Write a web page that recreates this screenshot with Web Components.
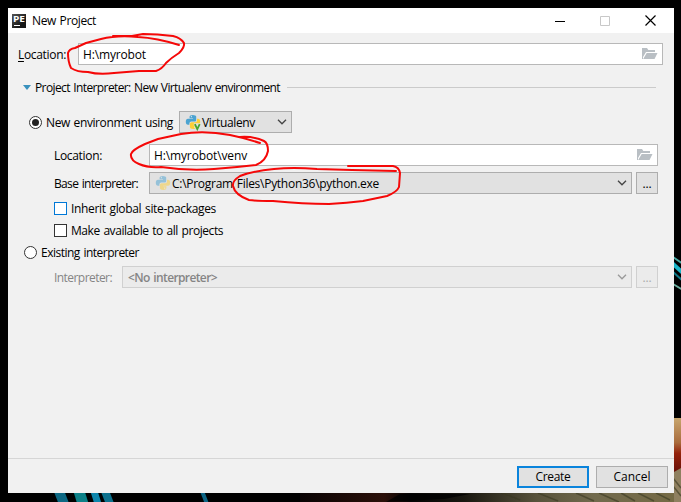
<!DOCTYPE html>
<html lang="en"><head><meta charset="utf-8"><title>New Project</title>
<style>html,body{margin:0;height:502px;overflow:hidden;background:#000}</style></head><body>
<project-screen></project-screen>
<script>
function define(name, html, setup){
  customElements.define(name, class extends HTMLElement{
    constructor(){super();const t=document.createElement('template');t.innerHTML=html;
      this.attachShadow({mode:'open'}).append(t.content.cloneNode(true));}
    connectedCallback(){if(setup)setup(this,this.shadowRoot);}
  });
}
/* Label set to a fixed advance width through letter-spacing. */
define('fit-text',`<style>:host{display:block;flex:none;white-space:pre;word-spacing:1px;line-height:16px;height:16px;padding-top:var(--drop,0px)}span{display:inline-block}</style><span><slot></slot></span>`,(h,r)=>{
  const w=+h.getAttribute('w'),s=r.querySelector('span');h.style.width=w+'px';
  const n=h.textContent.length,nat=s.getBoundingClientRect().width;
  s.style.letterSpacing=((w-nat)/n)+'px';
});
define('python-icon',`<style>:host{display:block;flex:none;width:16px;height:16px}:host([dim]){opacity:.5}:host(:not([env])) .v{display:none}svg{display:block;overflow:visible}</style>
<svg width="16" height="16" viewBox="0 0 16 16"><path fill="#4ba3d1" d="M4.6 2.6Q4.6 1 7.8 1T11.2 2.6V6.2Q11.2 7.6 9.8 7.6H6.2Q4.6 7.6 4.4 9.2v1.6H3Q.8 10.8.8 7.8T3 4.7H8V4.2H4.6z"/><path fill="#fdcf37" d="M12 4.7H13q2.2 0 2.2 3.1t-2.2 3H8.3v.5H11.4v1.8Q11.4 15 8.2 15T4.9 13.1V9.8Q4.9 8.2 6.5 8.2h3.8q1.7 0 1.7-1.7z"/><circle cx="6.4" cy="2.7" r=".6" fill="#dceaf1"/><circle cx="9.8" cy="13.1" r=".6" fill="#fff"/><path class="v" d="M8.8 9.2H16v6.8H11z" fill="#e1e1e1"/><path class="v" d="M9.9 10.2l2.4 5 2.4-5" fill="none" stroke="#49a532" stroke-width="1.8"/></svg>`);
define('folder-icon',`<style>:host{display:block;width:16px;height:12px;margin-left:auto;margin-right:4px}svg{display:block}</style>
<svg width="16" height="12"><path fill="#b9bfc4" d="M0 0h5l1.3 2H13v2H4L1 9V11H0zM4.7 5H15.5l-3 6H1.2z"/></svg>`);
define('chevron-icon',`<style>:host{display:block;width:10px;height:6px;margin-left:auto;margin-right:4px}svg{display:block}</style>
<svg width="10" height="6"><path d="M1 .8l4 4 4-4" fill="none" stroke="currentColor" stroke-width="1.3"/></svg>`);
define('text-field',`<style>:host{display:flex;align-items:center;box-sizing:border-box;height:22px;border:1px solid #b8b8b8;background:#fff;padding-left:4px}</style><slot></slot><folder-icon></folder-icon>`);
define('combo-box',`<style>:host{display:flex;align-items:center;box-sizing:border-box;height:22px;border:1px solid #adadad;background:#e1e1e1;padding-left:5px;color:#000}chevron-icon{color:#444}:host([disabled]){background:#ebebeb;border-color:#d0d0d0;color:#858585}:host([disabled]) chevron-icon{color:#999}</style><slot></slot><chevron-icon></chevron-icon>`);
define('push-button',`<style>:host{display:flex;align-items:center;justify-content:center;box-sizing:border-box;flex:none;height:22px;width:72px;border:1px solid #adadad;background:#e1e1e1}:host([primary]){border:2px solid #0a84dc}:host([small]){width:22px}:host([disabled]){background:#ebebeb;border-color:#d0d0d0;color:#aaa}</style><slot></slot>`);
define('radio-mark',`<style>:host{display:grid;place-items:center;flex:none;box-sizing:border-box;width:13px;height:13px;border:1px solid #333;border-radius:50%;background:#fff}:host([on])::after{content:"";width:7px;height:7px;border-radius:50%;background:#222}</style>`);
define('check-mark',`<style>:host{display:block;flex:none;box-sizing:border-box;width:13px;height:13px;border:1px solid #333;background:#fff}:host([hot]){border-color:#0078d7}</style>`);
define('form-row',`<style>:host{display:flex;align-items:center;height:22px}</style><slot></slot>`);
define('title-bar',`<style>:host{display:flex;align-items:center;height:25px;background:#fff;padding-left:4px;box-sizing:border-box}.logo{display:block;margin-right:6px}.controls{display:flex;margin-left:auto;align-items:center;gap:35px;padding-right:18px}.controls svg{display:block}</style>
<svg class="logo" width="14" height="14"><defs><linearGradient id="g" x2="1" y2="1"><stop stop-color="#555"/><stop offset=".7" stop-color="#171717"/></linearGradient></defs><rect width="14" height="14" fill="url(#g)"/><text x="1" y="8" font-family="Open Sans" font-size="8" font-weight="700" fill="#fff" textLength="12" lengthAdjust="spacingAndGlyphs">PE</text><path d="M2 11.5h6" stroke="#fff"/></svg><slot></slot>
<div class="controls"><svg width="10" height="10"><path d="M0 5.5h10" stroke="#000"/></svg><svg width="10" height="10"><path d="M.5.5h9v9h-9z" fill="none" stroke="#c8c8c8"/></svg><svg width="11" height="11"><path d="M.5.5l10 10m0-10l-10 10" stroke="#000" stroke-width="1.2"/></svg></div>`);
define('desktop-backdrop',`<style>:host{display:block;width:681px;height:502px}svg{display:block}</style><svg width="681" height="502"><defs><filter id="b"><feGaussianBlur stdDeviation=".7"/></filter><linearGradient id="h"><stop stop-color="#090303"/><stop offset=".22" stop-color="#2b1009"/><stop offset=".29" stop-color="#050404"/><stop offset=".43" stop-color="#191710"/><stop offset=".62" stop-color="#57523b"/><stop offset=".77" stop-color="#716a4d"/><stop offset="1" stop-color="#756a44"/></linearGradient><linearGradient id="s" x2="0" y2="1"><stop stop-color="#c7a66e"/><stop offset=".4" stop-color="#a96c3d"/><stop offset=".58" stop-color="#94220b"/><stop offset=".9" stop-color="#671009"/><stop offset="1" stop-color="#9e6544"/></linearGradient></defs><rect width="681" height="502" fill="#000"/><rect x="300" y="493" width="381" height="9" fill="url(#h)"/><path d="M386 502l14-8h70l-26 5z" fill="#000" opacity=".75"/><rect x="674" y="418" width="7" height="61" fill="url(#s)"/><path d="M674 472l7-4v34h-7z" fill="#8f8060"/>
<g fill="none" filter="url(#b)"><path d="M59 491l5 13" stroke="#086783" stroke-width="10"/><path d="M79 491l4 13" stroke="#078087" stroke-width="11"/><path d="M94 491l4 13" stroke="#0c86ac" stroke-width="7"/><path d="M105 491l5 13" stroke="#08718d" stroke-width="8"/><path d="M202 491l5 13" stroke="#086585" stroke-width="4"/><path d="M673 257l10 7" stroke="#4aaba5" stroke-width="2"/><path d="M672 263l11 10" stroke="#1eb5c8" stroke-width="4"/><path d="M672 271l11 10" stroke="#117988" stroke-width="2"/><path d="M673 284l10 6" stroke="#6eb0a1" stroke-width="2"/><path d="M502 493l18 7m18-7l20 8m18-8l18 8m5-8l20 9m2-9l14 8m3-8l16 8m2-8l14 7M673 478l8 10m-8-2l8 10" stroke="#393722" stroke-width="1.5" opacity=".6"/></g></svg>`);
define('ink-marks',`<style>:host{position:absolute;inset:0;pointer-events:none}svg{display:block}</style><svg width="681" height="502" fill="none" stroke="#f50808" stroke-width="2" stroke-linecap="round" stroke-linejoin="round"><path d="M179 45Q157 38 138 37Q117 35 101 39L86 43L75 48Q69 49 68 53Q68 62 71 68Q77 72 88 72Q99 75 114 73L139 71L156 71Q162 69 166 63Q171 58 179 53Q185 47 184 43Q181 38 173 36Q157 34 143 34L132 36L113 36"/><path d="M260 143Q245 138 230 135Q204 130 181 134L158 139L145 144Q132 150 131 154Q130 160 139 164Q148 168 161 167Q188 171 214 169L237 167L256 165Q266 161 268 151Q268 143 264 141Q253 136 240 137"/><path d="M396 171L352 170L317 169Q293 167 274 169Q253 171 240 176Q232 181 233 186Q235 195 249 200Q256 201 273 201Q303 204 329 204Q347 203 363 201L387 196Q397 192 399 187L400 173Q399 167 393 166L348 166"/></svg>`);
define('project-dialog',`<style>
:host{position:absolute;left:8px;top:8px;width:666px;height:485px;display:flex;flex-direction:column;background:#f1f1f1;color:#000;font:12px "Open Sans","Noto Sans",sans-serif}
main{--drop:2px;flex:1;display:flex;flex-direction:column}
text-field,combo-box.wide{flex:1}.top{margin:10px 11px 0 10px}.top fit-text:first-child{margin-right:12px}u{text-underline-offset:2px}
.heading{margin:11px 18px 0 15px}.tri{border:4px solid transparent;border-top:5px solid #3991bd;border-bottom:0;margin-right:4px}.line{height:1px;background:#cbcbcb;flex:1;margin-left:7px}
.env{margin:13px 16px 0 21px}.env radio-mark{margin-right:4px}.env combo-box{width:113px;margin-left:6px}.env python-icon{margin-right:1px}
.loc{margin:11px 16px 0 46px}.base{margin:6px 16px 0 46px}.field-label{width:95px}.base combo-box,.exist combo-box{margin-right:4px}.base python-icon{margin-right:1px}
.check{margin-left:46px;gap:4px}.inherit{margin-top:3px}.existing{margin-left:16px;gap:4px}.exist{margin:3px 16px 0 46px}.exist-label{width:68px;color:#858585}
footer{display:flex;align-items:center;justify-content:flex-end;gap:7px;height:35px;box-sizing:border-box;border-top:1px solid #d6d6d6;padding:1px 6px 0 0}
</style><title-bar><fit-text w="64">New Project</fit-text></title-bar><main>
<form-row class="top"><fit-text w="48"><u>L</u>ocation:</fit-text><text-field><fit-text w="63">H:\\myrobot</fit-text></text-field></form-row>
<form-row class="heading"><div class="tri"></div><fit-text w="245">Project Interpreter: New Virtualenv environment</fit-text><div class="line"></div></form-row>
<form-row class="env"><radio-mark on></radio-mark><fit-text w="127">New environment using</fit-text><combo-box><python-icon env></python-icon><fit-text w="53">Virtualenv</fit-text></combo-box></form-row>
<form-row class="loc"><div class="field-label"><fit-text w="48">Location:</fit-text></div><text-field><fit-text w="93">H:\\myrobot\\venv</fit-text></text-field></form-row>
<form-row class="base"><div class="field-label"><fit-text w="84">Base interpreter:</fit-text></div><combo-box class="wide"><python-icon dim></python-icon><fit-text w="207">C:\\Program Files\\Python36\\python.exe</fit-text></combo-box><push-button small><fit-text w="9">...</fit-text></push-button></form-row>
<form-row class="check inherit"><check-mark hot></check-mark><fit-text w="145">Inherit global site-packages</fit-text></form-row>
<form-row class="check"><check-mark></check-mark><fit-text w="152">Make available to all projects</fit-text></form-row>
<form-row class="existing"><radio-mark></radio-mark><fit-text w="98">Existing interpreter</fit-text></form-row>
<form-row class="exist"><div class="exist-label"><fit-text w="58">Interpreter:</fit-text></div><combo-box disabled class="wide"><fit-text w="89" style="font-weight:600">&lt;No interpreter&gt;</fit-text></combo-box><push-button small disabled><fit-text w="9">...</fit-text></push-button></form-row>
</main><footer><push-button primary><fit-text w="35">Create</fit-text></push-button><push-button><fit-text w="37">Cancel</fit-text></push-button></footer>`);
define('project-screen',`<style>:host{display:block;position:relative;width:681px;height:502px;overflow:hidden}</style><desktop-backdrop></desktop-backdrop><project-dialog></project-dialog><ink-marks></ink-marks>`);
</script></body></html>
